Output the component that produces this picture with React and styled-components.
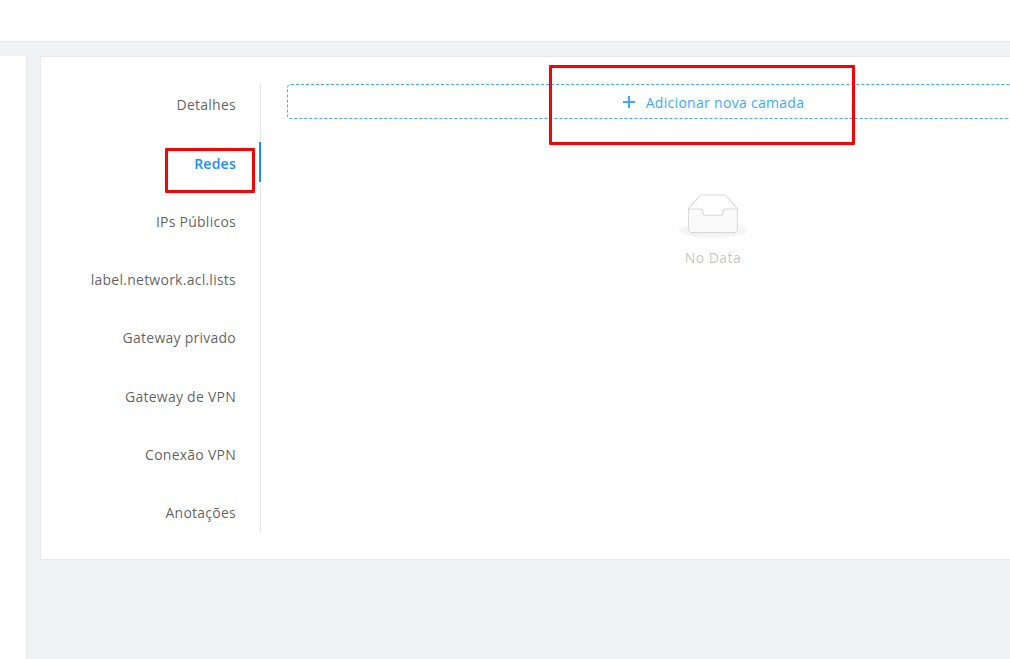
import React from 'react';
import styled, { createGlobalStyle } from 'styled-components';

const Global = createGlobalStyle`
  html, body { margin: 0; padding: 0; }
  body { font-family: "Open Sans", "Noto Sans", sans-serif; font-size: 14px; }
`;

const Page = styled.div`
  position: relative;
  width: 1010px;
  height: 659px;
  overflow: hidden;
  background: #f0f2f5;
`;
const TopBar = styled.header`
  height: 41px;
  background: #fff;
  border-bottom: 1px solid #e8e8e8;
`;
const Body = styled.div`
  display: flex;
  align-items: flex-start;
  gap: 13px;
  padding-top: 14px;
  width: 1200px;
`;
const SidePanel = styled.aside`
  flex: none;
  width: 26px;
  height: 603px;
  background: #fff;
  border-right: 1px solid #e8e8e8;
`;
const Card = styled.section`
  flex: none;
  display: flex;
  width: 1130px;
  height: 504px;
  box-sizing: border-box;
  padding: 27px 0 27px 0;
  background: #fff;
  border: 1px solid #e8e8e8;
`;
const Tabs = styled.nav`
  flex: none;
  position: relative;
  display: flex;
  flex-direction: column;
  gap: 18.305px;
  width: 220px;
  height: 448px;
  box-sizing: border-box;
  border-right: 1px solid #e8e8e8;
`;
const Tab = styled.div`
  flex: none;
  height: 40px;
  display: flex;
  align-items: center;
  justify-content: flex-end;
  padding: 1.6px 24px 0 0;
  box-sizing: border-box;
  letter-spacing: .25px;
  color: ${p => (p.$active ? '#1890ff' : 'rgba(0,0,0,.65)')};
  font-weight: ${p => (p.$active ? 600 : 400)};
`;
const InkBar = styled.span`
  position: absolute;
  right: -1px;
  top: 58px;
  width: 2px;
  height: 40px;
  background: #1890ff;
`;
const Content = styled.div`
  flex: none;
  width: 852px;
  margin-left: 26px;
  display: flex;
  flex-direction: column;
`;
const AddButton = styled.button`
  height: 35px;
  display: flex;
  align-items: center;
  justify-content: center;
  gap: 11px;
  padding: 2px 0 0 1px;
  background: #fff;
  border: 1px dashed #40a9ff;
  border-radius: 4px;
  color: #40a9ff;
  font: inherit;
  letter-spacing: .3px;
`;
const Empty = styled.div`
  display: flex;
  flex-direction: column;
  align-items: center;
  margin-top: 75px;
  color: rgba(0,0,0,.25);
`;
const EmptyLabel = styled.div`
  margin-top: 9px;
  line-height: 22px;
  letter-spacing: .43px;
`;
const Note = styled.div`
  position: absolute;
  left: ${p => p.$x}px;
  top: ${p => p.$y}px;
  width: ${p => p.$w}px;
  height: ${p => p.$h}px;
  box-sizing: border-box;
  border: 3px solid #f00;
  border-radius: 1px;
  pointer-events: none;
`;

const PlusIcon = () => (
  <svg width="12" height="12" viewBox="0 0 12 12" fill="none" stroke="#40a9ff" strokeWidth="2" style={{ marginTop: -2 }}>
    <path d="M6 0v12M0 6h12" />
  </svg>
);

const EmptyIcon = () => (
  <svg width="68" height="44" viewBox="0 0 64 41" preserveAspectRatio="none">
    <g transform="translate(0 1)" fill="none" fillRule="evenodd">
      <ellipse fill="#f5f5f5" cx="32" cy="33" rx="32" ry="7" />
      <g fillRule="nonzero" stroke="#d9d9d9">
        <path d="M55 12.76L44.854 1.258C44.367.474 43.656 0 42.907 0H21.093c-.749 0-1.46.474-1.947 1.257L9 12.761V22h46v-9.24z" />
        <path d="M41.613 15.931c0-1.605.994-2.93 2.227-2.931H55v18.137C55 33.26 53.68 35 52.05 35h-40.1C10.32 35 9 33.259 9 31.137V13h11.16c1.233 0 2.227 1.323 2.227 2.928v.022c0 1.605 1.005 2.901 2.237 2.901h14.752c1.232 0 2.237-1.308 2.237-2.913v-.007z" fill="#fafafa" />
      </g>
    </g>
  </svg>
);

const tabs = ['Detalhes', 'Redes', 'IPs Públicos', 'label.network.acl.lists', 'Gateway privado', 'Gateway de VPN', 'Conexão VPN', 'Anotações'];

export default function App() {
  return (
    <Page>
      <Global />
      <TopBar />
      <Body>
        <SidePanel />
        <Card>
          <Tabs>
            {tabs.map(t => <Tab key={t} $active={t === 'Redes'}>{t}</Tab>)}
            <InkBar />
          </Tabs>
          <Content>
            <AddButton><PlusIcon />Adicionar nova camada</AddButton>
            <Empty>
              <EmptyIcon />
              <EmptyLabel>No Data</EmptyLabel>
            </Empty>
          </Content>
        </Card>
      </Body>
      <Note $x={549} $y={65} $w={306} $h={80} />
      <Note $x={165} $y={148} $w={90} $h={45} />
    </Page>
  );
}
